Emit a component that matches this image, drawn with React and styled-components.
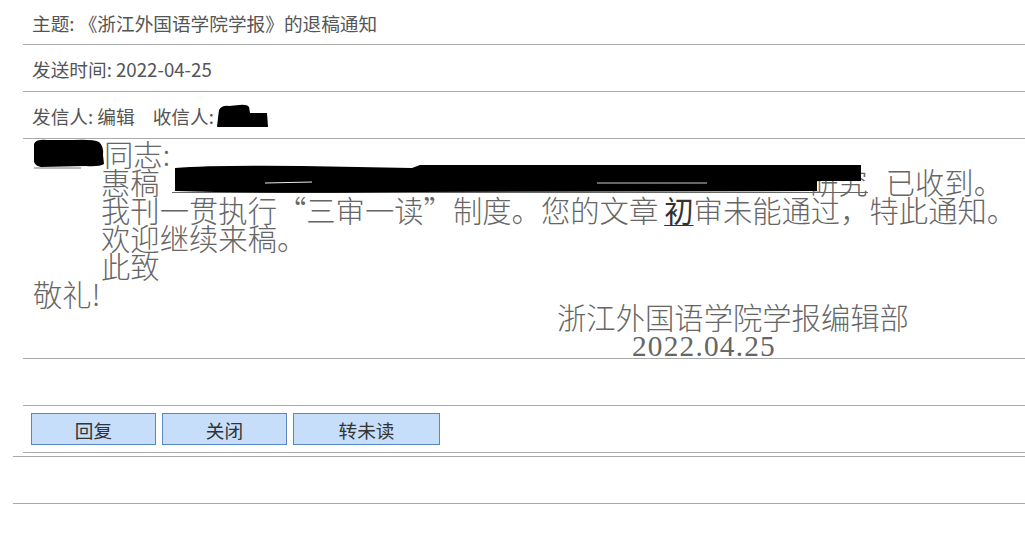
import React from 'react';
import styled, {createGlobalStyle} from 'styled-components';

const GlobalStyle = createGlobalStyle`
  html, body {
    margin: 0;
    padding: 0;
    background: #fff;
  }
  body {
    font-family: "Noto Sans CJK SC", "Noto Sans", sans-serif;
  }
`;

const Page = styled.div`
  padding-left: 13px;
  overflow: hidden;
`;

const Card = styled.div`
  margin-left: 10px;
`;

const Row = styled.div`
  height: ${props => props.$h || 46}px;
  display: flex;
  align-items: center;
  padding-left: 9px;
  border-bottom: 1px solid #aaa;
  font-size: 18.67px;
  color: #555;
  white-space: nowrap;
`;

const Gap = styled.span`
  display: inline-block;
  width: 18px;
`;

const Blob = styled.svg`
  display: inline-block;
  vertical-align: top;
  flex: none;
  margin-left: ${props => props.$ml || 0}px;
  margin-top: ${props => props.$mt || 0}px;
`;

const Body = styled.div`
  height: 219px;
  padding: 0 10px;
  border-bottom: 1px solid #aaa;
  font-family: "Noto Sans CJK SC", "Liberation Serif", serif;
  font-size: 29.33px;
  font-weight: 300;
  line-height: 28px;
  color: #666;
`;

const Line = styled.div`
  height: 28px;
  padding-left: ${props => props.$indent || 0}px;
  white-space: nowrap;
`;

const Sign = styled.div`
  height: 30px;
  line-height: 30px;
  padding-left: ${props => props.$indent || 0}px;
  white-space: nowrap;
  font-family: ${props => (props.$latin ? '"Liberation Serif", serif' : 'inherit')};
  letter-spacing: ${props => (props.$latin ? '1.2px' : '0')};
  font-weight: ${props => (props.$latin ? 400 : 300)};
`;

const SignBlock = styled.div`
  margin-top: -6px;
`;

const Hidden = styled.span`
  position: relative;
  display: inline-block;
  vertical-align: top;
  width: 696px;
  height: 25px;
  margin: 0 18px 0 12px;
  border-bottom: 1px solid #666;
  text-align: right;
  overflow: visible;
`;

const Cover = styled.svg`
  position: absolute;
  left: 0;
  top: -3px;
`;

const Mark = styled.span`
  color: #333;
  font-weight: 400;
  text-decoration: underline;
  text-underline-offset: 3px;
  text-decoration-thickness: 1px;
  margin-left: 6px;
`;

const ButtonRow = styled.div`
  height: 46px;
  display: flex;
  align-items: center;
  gap: 6px;
  padding-left: 8px;
  border-bottom: 1px solid #aaa;
`;

const Button = styled.button`
  width: ${props => props.$w}px;
  height: 32px;
  padding: 0;
  margin: 0;
  background: #c6defa;
  border: 1px solid #5b86c4;
  color: #333;
  font-family: "Noto Sans CJK SC", sans-serif;
  font-size: 18.67px;
  cursor: pointer;
`;

const Footer = styled.div`
  margin-top: 3px;
  height: 46px;
  border-top: 1px solid #aaa;
  border-bottom: 1px solid #aaa;
`;

function NameBlob() {
  return (
    <Blob width="71" height="30" viewBox="0 0 71 30">
      <path d="M1 5 Q3 0 14 1 L40 1 Q60 0 66 3 Q71 7 70 16 L71 25 Q66 28 52 27 L8 28 Q0 27 1 19 Z" fill="#000" />
      <line x1="1" y1="29" x2="48" y2="29" stroke="#777" strokeWidth="1" />
    </Blob>
  );
}

function ReceiverBlob() {
  return (
    <Blob width="51" height="24" viewBox="0 0 51 24" $ml={3} $mt={2}>
      <path d="M2 6 Q5 1 12 2 L22 1 Q30 0 32 3 L33 9 L50 9 L51 23 L0 23 L1 14 Z" fill="#000" />
    </Blob>
  );
}

function Redacted() {
  return (
    <Hidden>
      研究
      <Cover width="700" height="30" viewBox="0 0 700 30">
        <path d="M3 4 Q40 1 130 2 L240 4 L248 1 L689 1 L689 17 L645 17 L645 27 L240 28 Q110 30 3 27 Z" fill="#000" />
        <line x1="93" y1="19" x2="140" y2="18" stroke="#eee" strokeWidth="1" />
        <line x1="425" y1="19" x2="535" y2="19" stroke="#ccc" strokeWidth="1" />
      </Cover>
    </Hidden>
  );
}

export default function App() {
  return (
    <Page>
      <GlobalStyle />
      <Card>
        <Row $h={44}>主题: 《浙江外国语学院学报》的退稿通知</Row>
        <Row>发送时间: 2022-04-25</Row>
        <Row>
          发信人: 编辑<Gap />收信人:
          <ReceiverBlob />
        </Row>
        <Body>
          <Line><NameBlob />同志:</Line>
          <Line $indent={68}>惠稿<Redacted />已收到。</Line>
          <Line $indent={68}>我刊一贯执行“三审一读”制度。您的文章<Mark>初</Mark>审未能通过，特此通知。</Line>
          <Line $indent={68}>欢迎继续来稿。</Line>
          <Line $indent={68}>此致</Line>
          <Line>敬礼!</Line>
          <SignBlock>
            <Sign $indent={524}>浙江外国语学院学报编辑部</Sign>
            <Sign $indent={599} $latin>2022.04.25</Sign>
          </SignBlock>
        </Body>
        <Row />
        <ButtonRow>
          <Button $w={125}>回复</Button>
          <Button $w={125}>关闭</Button>
          <Button $w={147}>转未读</Button>
        </ButtonRow>
      </Card>
      <Footer />
    </Page>
  );
}
